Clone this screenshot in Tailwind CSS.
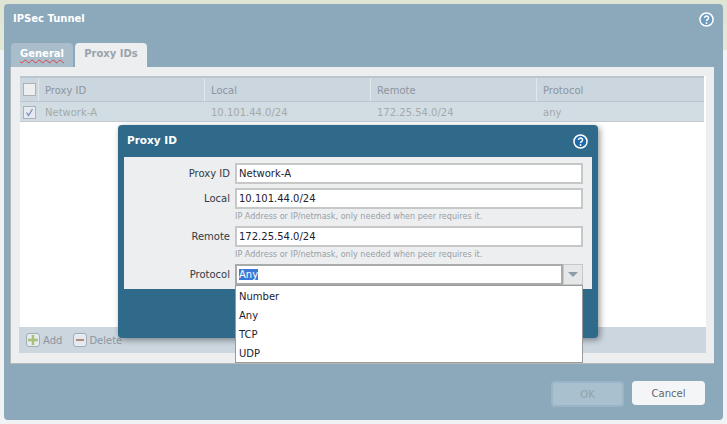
<!DOCTYPE html>
<html lang="en">
<head>
<meta charset="UTF-8">
<title>IPSec Tunnel</title>
<script src="https://cdn.jsdelivr.net/npm/@tailwindcss/browser@4"></script>
</head>
<body class="bg-[#e9ede6] font-['DejaVu_Sans',sans-serif] text-[10px] overflow-hidden">
<div class="relative w-[727px] h-[424px] overflow-hidden">
  <!-- page behind the dialog -->
  <div class="h-[25px] bg-[#dfe4d3]"></div>
  <div class="h-[25px] bg-[#e3e7d6]"></div>
  <div class="h-[374px] bg-[#f0f2f3]"></div>

  <!-- IPSec Tunnel window -->
  <div class="absolute left-[4px] top-[4px] w-[719px] h-[416px] rounded-[4px] bg-[#8ca9bc] px-[6px]">
    <div class="flex items-start justify-between h-[39px] pt-[7px] pl-[3px] pr-[3px]">
      <span class="text-[10px] font-bold text-white">IPSec Tunnel</span>
      <svg class="w-[15px] h-[15px] mt-[1px]" viewBox="0 0 16 16"><circle cx="8" cy="8" r="7" fill="#6c9cc0" stroke="#fff" stroke-width="1.6"/><path d="M5.8 6.3a2.2 2 0 1 1 3.4 1.7c-.8.5-1.2.9-1.2 1.6" fill="none" stroke="#fff" stroke-width="1.6"/><circle cx="8" cy="11.7" r="1" fill="#fff"/></svg>
    </div>
    <div class="flex gap-[2px] h-[24px] pl-[1px] items-end">
      <div class="h-[24px] w-[62px] rounded-t-[4px] bg-[#a9bdcb] text-center text-[10px] font-bold text-white leading-[22px]"><span class="underline decoration-wavy decoration-[#e04040] decoration-[1px] underline-offset-2">General</span></div>
      <div class="h-[24px] w-[72px] rounded-t-[4px] bg-[#eceef0] text-center text-[10px] font-bold text-[#9aa3ab] leading-[22px]">Proxy IDs</div>
    </div>
    <div class="w-[704px] h-[297px] bg-[#eceef0] border-b border-l border-[#b5b9bb] pt-[9px] pl-[9px] pr-[8px]">
      <div class="flex flex-col h-[277px] bg-white">
        <div class="flex w-[684px] h-[26px] bg-[#cbd6df] border-t-2 border-b border-[#b9c5cf] text-[#8d95a0] leading-[25px]">
          <div class="flex items-center justify-center w-[19px] border-r border-[#e3e8ec]"><span class="block w-[13px] h-[13px] bg-[#eceef0] border border-[#a9b2ba]"></span></div>
          <div class="w-[166px] pl-[6px] border-r border-[#e3e8ec]">Proxy ID</div>
          <div class="w-[166px] pl-[6px] border-r border-[#e3e8ec]">Local</div>
          <div class="w-[166px] pl-[6px] border-r border-[#e3e8ec]">Remote</div>
          <div class="flex-1 pl-[6px]">Protocol</div>
        </div>
        <div class="flex w-[684px] h-[20px] bg-[#d1dce3] border-b border-[#c3cbd1] text-[#a5aaa8] leading-[22px]">
          <div class="flex items-center justify-center w-[19px]">
            <span class="flex items-center justify-center w-[13px] h-[13px] mt-[1px] bg-[#e6eaee] border border-[#a9b2ba]"><svg class="w-[9px] h-[9px]" viewBox="0 0 9 9"><path d="M1.5 4.5l2 3L7.5 1" fill="none" stroke="#7a8cc0" stroke-width="1.3"/></svg></span>
          </div>
          <div class="w-[166px] pl-[6px]">Network-A</div>
          <div class="w-[166px] pl-[6px]">10.101.44.0/24</div>
          <div class="w-[166px] pl-[6px]">172.25.54.0/24</div>
          <div class="flex-1 pl-[6px]">any</div>
        </div>
        <div class="flex-1"></div>
        <div class="flex items-center h-[26px] bg-[#cbd6df] -ml-[1px] pl-[7px] text-[#8d95a0]">
          <span class="flex items-center justify-center w-[14px] h-[14px] rounded-[3px] bg-[#e6eaee] border border-[#a3adb6]"><svg class="w-[10px] h-[10px]" viewBox="0 0 10 10"><path d="M5 0v10M0 5h10" stroke="#a9c078" stroke-width="2.4"/></svg></span>
          <span class="ml-[3px] mr-[11px]">Add</span>
          <span class="flex items-center justify-center w-[14px] h-[14px] rounded-[3px] bg-[#e6eaee] border border-[#a3adb6]"><span class="block w-[8px] h-[2px] bg-[#b08a80]"></span></span>
          <span class="ml-[2px]">Delete</span>
        </div>
      </div>
    </div>
    <div class="flex justify-end gap-[8px] pt-[17px] pr-[12px]">
      <button class="w-[73px] h-[26px] rounded-[4px] bg-[#a9c0ce] border-2 border-[#9ab5c8] text-[10px] text-[#8fa3b0]">OK</button>
      <button class="w-[73px] h-[24px] rounded-[4px] bg-[#f4f5f7] text-[10px] text-[#5f6670]">Cancel</button>
    </div>
  </div>

  <!-- Proxy ID dialog -->
  <div class="absolute left-[118px] top-[125px] w-[480px] h-[213px] rounded-[4px] bg-[#2f6a8a] px-[6px] shadow-[2px_2px_6px_rgba(0,0,0,0.4)]">
    <div class="flex items-center justify-between h-[32px] pl-[3px] pr-[4px]">
      <span class="text-[10.5px] font-bold text-white">Proxy ID</span>
      <svg class="w-[15px] h-[15px]" viewBox="0 0 16 16"><circle cx="8" cy="8" r="7" fill="#1f6aa8" stroke="#fff" stroke-width="1.6"/><path d="M5.8 6.3a2.2 2 0 1 1 3.4 1.7c-.8.5-1.2.9-1.2 1.6" fill="none" stroke="#fff" stroke-width="1.6"/><circle cx="8" cy="11.7" r="1" fill="#fff"/></svg>
    </div>
    <div class="flex flex-col h-[132px] bg-[#eceef0] pt-[6px] pr-[9px] text-[#333a44]">
      <div class="flex h-[21px] items-center">
        <label class="w-[106px] text-right">Proxy ID</label>
        <div class="ml-[5px] w-[348px] h-[21px] bg-white border-2 border-[#c6c8c8] pl-[2px] leading-[18px] text-[#1c2230]">Network-A</div>
      </div>
      <div class="flex h-[21px] mt-[4px] items-center">
        <label class="w-[106px] text-right">Local</label>
        <div class="ml-[5px] w-[348px] h-[21px] bg-white border-2 border-[#c6c8c8] pl-[2px] leading-[18px] text-[#1c2230]">10.101.44.0/24</div>
      </div>
      <div class="ml-[111px] h-[13px] text-[8.1px] leading-[14px] text-[#9a9fa6]">IP Address or IP/netmask, only needed when peer requires it.</div>
      <div class="flex h-[21px] mt-[4px] items-center">
        <label class="w-[106px] text-right">Remote</label>
        <div class="ml-[5px] w-[348px] h-[21px] bg-white border-2 border-[#c6c8c8] pl-[2px] leading-[18px] text-[#1c2230]">172.25.54.0/24</div>
      </div>
      <div class="ml-[111px] h-[13px] text-[8.1px] leading-[14px] text-[#9a9fa6]">IP Address or IP/netmask, only needed when peer requires it.</div>
      <div class="flex h-[21px] mt-[4px] items-center">
        <label class="w-[106px] text-right">Protocol</label>
        <div class="flex ml-[5px] w-[348px] h-[21px]">
          <div class="flex-1 bg-white border-2 border-[#a9abab] pl-[2px] leading-[18px] text-white"><span class="bg-[#3b78d8]">Any</span></div>
          <div class="flex items-center justify-center w-[20px] bg-[#e6e7e8] border border-[#c6c8c8]"><span class="block w-0 h-0 border-x-[5px] border-x-transparent border-t-[5px] border-t-[#8a9cab]"></span></div>
        </div>
      </div>
    </div>
  </div>

  <!-- Protocol dropdown -->
  <ul class="absolute left-[235px] top-[285px] w-[348px] h-[78px] bg-white border border-[#9a9a9a] pt-[1px] text-[#1c2230] leading-[19px]">
    <li class="pl-[3px]">Number</li>
    <li class="pl-[3px]">Any</li>
    <li class="pl-[3px]">TCP</li>
    <li class="pl-[3px]">UDP</li>
  </ul>
</div>
</body>
</html>
